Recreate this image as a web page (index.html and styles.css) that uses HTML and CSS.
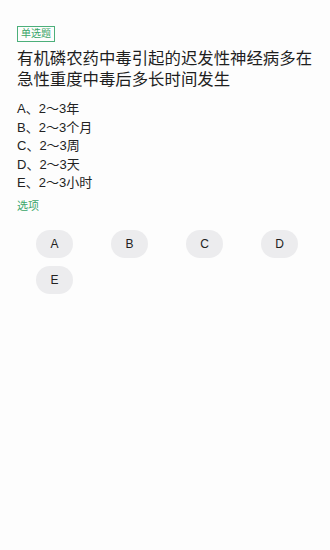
FILE: index.html
```html
<!DOCTYPE html>
<html lang="zh">
<head>
<meta charset="utf-8">
<link rel="stylesheet" href="styles.css">
</head>
<body>
<div class="page">
  <div class="tag">单选题</div>
  <div class="title">有机磷农药中毒引起的迟发性神经病多在急性重度中毒后多长时间发生</div>
  <div class="options">
    <div class="opt">A、2～3年</div>
    <div class="opt">B、2～3个月</div>
    <div class="opt">C、2～3周</div>
    <div class="opt">D、2～3天</div>
    <div class="opt">E、2～3小时</div>
  </div>
  <div class="label">选项</div>
  <div class="choices">
    <div class="cell"><div class="btn">A</div></div>
    <div class="cell"><div class="btn">B</div></div>
    <div class="cell"><div class="btn">C</div></div>
    <div class="cell"><div class="btn">D</div></div>
    <div class="cell"><div class="btn">E</div></div>
  </div>
</div>
</body>
</html>
```
FILE: styles.css
```css
html, body {
  margin: 0;
  padding: 0;
  background: #fdfdfd;
}
body {
  font-family: "Liberation Sans", "Noto Sans CJK SC", sans-serif;
  color: #222;
}
.page {
  padding: 26px 13px 20px 17px;
}
.tag {
  display: flex;
  align-items: center;
  width: fit-content;
  box-sizing: border-box;
  height: 16px;
  padding: 0 3px;
  border: 1px solid #4caf7a;
  color: #3aa568;
  font-size: 10px;
  line-height: 14px;
}
.title {
  margin-top: 6px;
  font-size: 16.4px;
  line-height: 21px;
  color: #1f1f1f;
}
.options {
  margin-top: 10px;
}
.opt {
  font-size: 13px;
  line-height: 18.5px;
  color: #222;
}
.label {
  margin-top: 6.5px;
  font-size: 11px;
  line-height: 14px;
  color: #3aa568;
}
.choices {
  margin-top: 17px;
  width: 300px;
  display: grid;
  grid-template-columns: repeat(4, 75px);
  row-gap: 8px;
}
.cell {
  display: flex;
  justify-content: center;
}
.btn {
  width: 37px;
  height: 28px;
  border-radius: 14px;
  background: #ececee;
  display: flex;
  align-items: center;
  justify-content: center;
  font-size: 12px;
  color: #222;
}
```
